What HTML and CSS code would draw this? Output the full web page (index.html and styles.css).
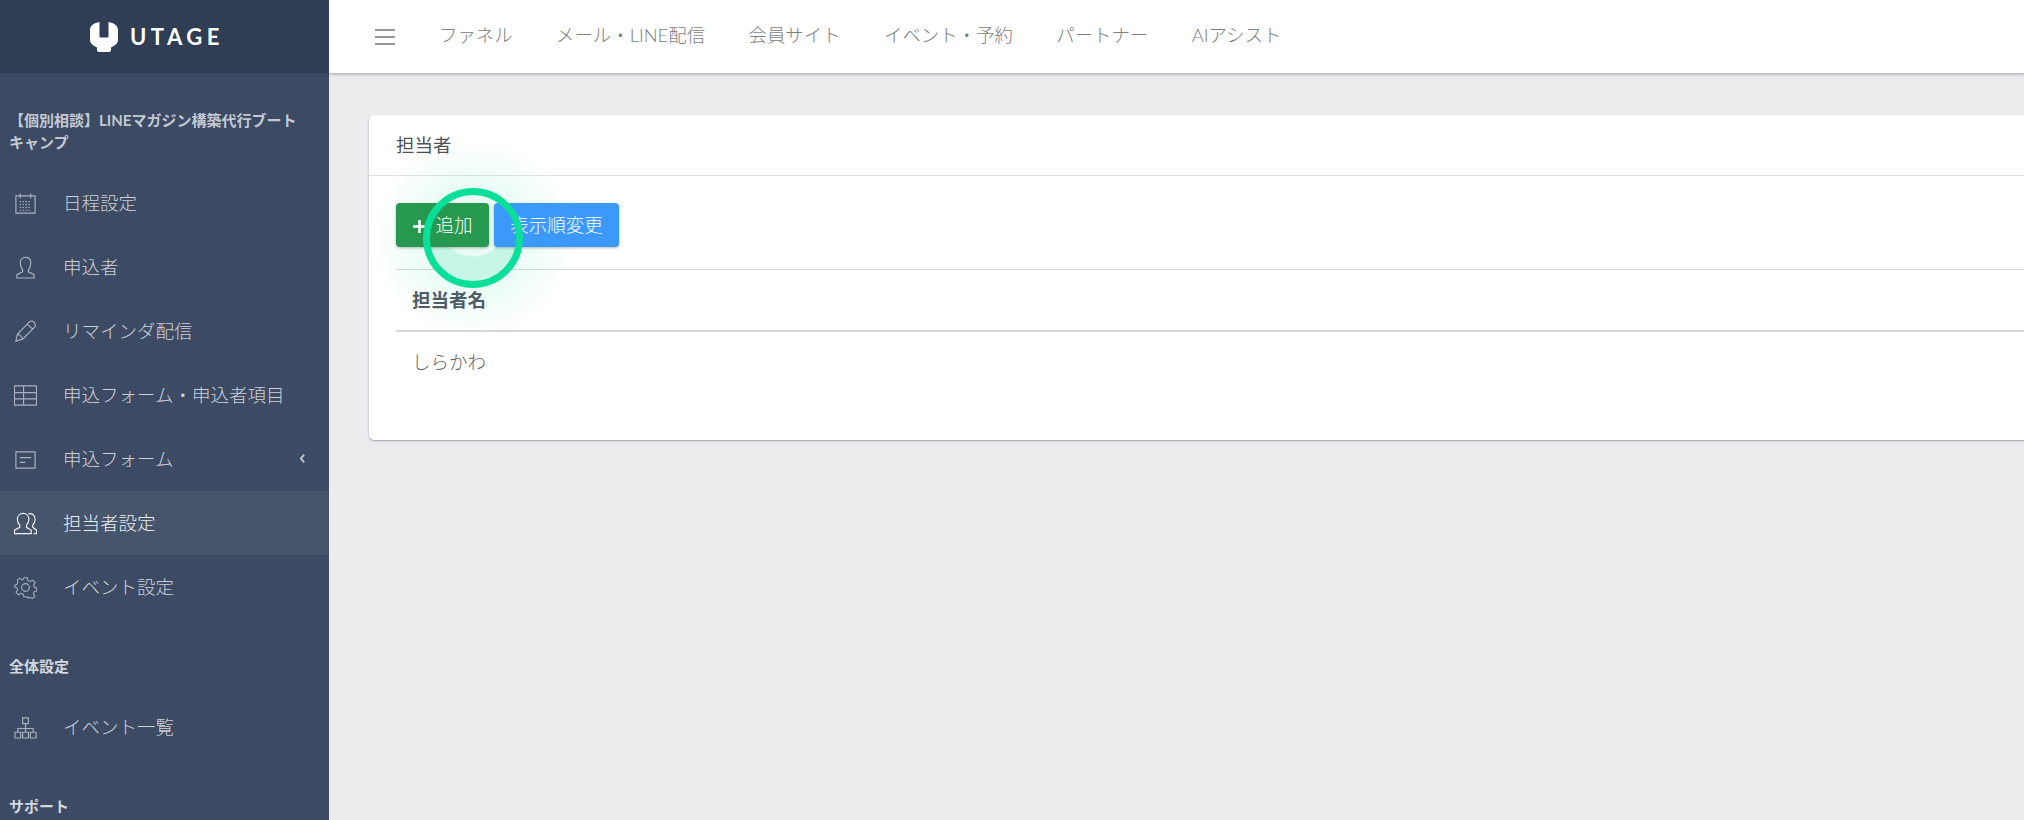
FILE: index.html
```html
<!DOCTYPE html>
<html lang="ja">
<head>
<meta charset="utf-8">
<title>担当者設定</title>
<link rel="stylesheet" href="styles.css">
</head>
<body>
<div class="app">
  <aside class="sidebar">
    <div class="brand">
      <svg class="brand-mark" viewBox="0 0 28 30"><path d="M9.500 0C4 1 0 3.500 0 8v10c0 3 2 5 7 7.500V28c0 1 1 2 2 2h10c1 0 2-1 2-2v-2.500c5-2.500 7-4.500 7-7.500V8c0-4.500-4-7-9.500-8v14.500c0 .6-.4 1-1 1h-7c-.6 0-1-.4-1-1z" fill="#fff"/></svg>
      <span class="brand-name">UTAGE</span>
    </div>
    <div class="side-heading event-title">【個別相談】LINEマガジン構築代行ブートキャンプ</div>
    <nav class="side-list">
      <a class="side-item"><svg class="ico" viewBox="0 0 24 24"><path d="M2 4h20v18H2zM6.500 1.500v5M17.500 1.500v5"/><path class="dots" d="M6 10h12M6 13h12M6 16h12M6 19h12"/></svg><span>日程設定</span></a>
      <a class="side-item"><svg class="ico" viewBox="0 0 24 24"><path d="M9 14.500C7.500 12.500 6.500 9.500 6.500 7c0-3.300 2.300-5.500 5.500-5.500s5.500 2.200 5.500 5.500c0 2.500-1 5.500-2.500 7.500v2l6 3v3.500H3V19.500l6-3z"/></svg><span>申込者</span></a>
      <a class="side-item"><svg class="ico" viewBox="0 0 24 24"><path d="M2 22l1.500-7L16 2c1.500-1 3.500-1 5 .5s1.500 3.500.5 5L9 20zM3.500 15c2.500 0 5 2.500 5.500 5M14 4.500l5.500 5"/></svg><span>リマインダ配信</span></a>
      <a class="side-item"><svg class="ico" viewBox="0 0 24 24"><path d="M.500 2h23v20H.500zM.500 9h23M.500 15.500h23M10 2v20"/></svg><span>申込フォーム・申込者項目</span></a>
      <a class="side-item has-caret"><svg class="ico" viewBox="0 0 24 24"><path d="M2 4h20v17H2zM6 10h12M6 15h6"/></svg><span>申込フォーム</span><svg class="caret" viewBox="0 0 6 10"><path d="M4.500 1.500 1.500 5l3 3.500"/></svg></a>
      <a class="side-item active"><svg class="ico" viewBox="0 0 24 24"><path d="M6 14c-1.500-2-2.500-4-2.500-6.500C3.500 4 6 1.500 9.500 1.500s6 2.500 6 6c0 2.500-1 4.500-2.500 6.500v2l5 3v3.500H.500V19l5.500-3zM15 2c4-1 7 1.500 7 5.500 0 2.500-1 4.500-2.500 6.500v2l4 3v3.500h-3"/></svg><span>担当者設定</span></a>
      <a class="side-item"><svg class="ico" viewBox="0 0 24 24"><circle cx="12" cy="12" r="4"/><path d="M10 1h4l.8 3.300 2.500 1 3-1.700 2.800 3-1.800 2.800 1 2.500 2.700.8v3.600l-3 .8-1 2.500 1.700 2.900-2.800 2.700-2.900-1.700-2.500 1L14 23h-4l-.8-3-2.500-1-2.900 1.700-2.800-2.800L2.700 15l-1-2.500L-.5 12v-2.400l2.500-.8 1-2.500L2.400 3.700l2.800-2.400 2.900 2 1.200-.5z" transform="translate(1.300 1) scale(.9)"/></svg><span>イベント設定</span></a>
    </nav>
    <div class="side-heading group-title">全体設定</div>
    <nav class="side-list">
      <a class="side-item"><svg class="ico" viewBox="0 0 24 24"><path d="M9 2h6v6H9zM1 17h6v6H1zM9 17h6v6H9zM17 17h6v6h-6zM12 8v9M4 17v-4h16v4"/></svg><span>イベント一覧</span></a>
    </nav>
    <div class="side-heading group-title support">サポート</div>
  </aside>
  <div class="main">
    <header class="topbar">
      <svg class="burger" viewBox="0 0 20 16"><path d="M0 1h20M0 8h20M0 15h20"/></svg>
      <nav class="top-nav">
        <a>ファネル</a><a>メール・LINE配信</a><a>会員サイト</a><a>イベント・予約</a><a>パートナー</a><a>AIアシスト</a>
      </nav>
    </header>
    <main class="content">
      <section class="card">
        <h2 class="card-head">担当者</h2>
        <div class="card-body">
          <div class="actions">
            <button class="btn btn-add"><svg class="plus" viewBox="0 0 12 12"><path d="M6 0v12M0 6h12"/></svg>追加</button>
            <button class="btn btn-sort">表示順変更</button>
          </div>
          <table class="table">
            <thead><tr><th>担当者名</th></tr></thead>
            <tbody><tr><td>しらかわ</td></tr></tbody>
          </table>
        </div>
      </section>
    </main>
  </div>
</div>
<div class="click-glow"></div>
<div class="click-mark"></div>
</body>
</html>
```
FILE: styles.css
```css
* { box-sizing: border-box; }
html, body { margin: 0; height: 100%; overflow: hidden; }
body {
  font-family: Lato, "Noto Sans CJK JP", sans-serif;
  font-size: 18.5px;
  font-weight: 300;
  color: #676a6c;
  background: #ebecee;
}
.app { display: flex; height: 820px; }
.sidebar {
  width: 329px;
  flex: none;
  background: #3c4a63;
  color: #c6ccd6;
  overflow: hidden;
}
.brand {
  height: 73px;
  background: #2f3d55;
  display: flex;
  align-items: center;
  justify-content: center;
  gap: 12px;
  padding-right: 15px;
}
.brand-mark { width: 28px; height: 30px; margin-top: 1px; flex: none; }
.brand-name { color: #fff; font-size: 22px; font-weight: 700; letter-spacing: 4.5px; line-height: 1; }
.side-heading { font-size: 15px; font-weight: 700; padding: 0 20px 0 9px; color: #c3c9d3; }
.event-title { margin-top: 36px; height: 62px; line-height: 22px; }
.group-title { line-height: 22px; margin-top: 36px; margin-bottom: 18px; color: #d3d7de; }
.support { margin-top: 36px; }
.side-list { display: flex; flex-direction: column; }
.side-item {
  height: 64px;
  display: flex;
  align-items: center;
  padding-left: 14px;
  gap: 26px;
  color: #cdd2da;
}
.side-item span { margin-top: -3px; }
.side-item .ico {
  width: 23px;
  height: 23px;
  flex: none;
  fill: none;
  stroke: #aab2bf;
  stroke-width: 1.200;
}
.side-item .dots { stroke-dasharray: 1.500 1.500; }
.side-item.active { background: #46546c; color: #eef0f3; }
.side-item.active .ico { stroke: #f0f2f5; }
.has-caret { position: relative; }
.has-caret .caret {
  position: absolute;
  right: 23px;
  top: 26px;
  width: 7px;
  height: 11px;
  fill: none;
  stroke: #b9c0cb;
  stroke-width: 1.800;
}
.main { flex: 1; min-width: 0; display: flex; flex-direction: column; }
.topbar {
  height: 73px;
  background: #fff;
  display: flex;
  align-items: center;
  padding-left: 46px;
  box-shadow: 0 1px 3px rgba(60, 64, 90, .45);
  position: relative;
}
.burger { width: 20px; height: 16px; stroke: #757575; stroke-width: 1.400; fill: none; flex: none; }
.top-nav { display: flex; gap: 43.5px; margin-left: 44px; margin-top: -5px; font-size: 18.4px; color: #7b7e81; }
.content { padding: 42px 0 0 40px; }
.card {
  background: #fff;
  width: 1700px;
  height: 325px;
  border-radius: 5px;
  box-shadow: 0 1px 2px rgba(60, 64, 100, .45);
}
.card-head {
  margin: 0;
  height: 61px;
  line-height: 60px;
  padding-left: 27px;
  font-size: 18.5px;
  font-weight: 400;
  color: #4f5357;
  border-bottom: 1px solid #dfe1e4;
}
.card-body { padding: 27px 0 0 27px; }
.actions { display: flex; gap: 5px; height: 67px; border-bottom: 1px solid #d8dadc; }
.btn {
  position: relative;
  z-index: 1;
  height: 44px;
  border: 0;
  border-radius: 4px;
  color: #fff;
  font: inherit;
  padding: 0 0 3px;
  box-shadow: 0 1px 3px rgba(40, 50, 70, .35);
}
.btn-add { width: 93px; background: #27984f; }
.btn-sort { width: 125px; background: #3b99fc; }
.plus { width: 13px; height: 13px; stroke: #fff; stroke-width: 2.400; fill: none; margin: 0 9px 0 1px; vertical-align: -1px; }
.table { position: relative; z-index: 1; border-collapse: collapse; width: 100%; }
.table th {
  text-align: left;
  height: 61px;
  padding: 0 16px 3px;
  color: #4f5b67;
  font-weight: 700;
  border-bottom: 2px solid #d4d6d9;
}
.table td { height: 60px; padding: 0 16px 2px; color: #5f6266; }
.click-glow {
  position: absolute;
  left: 373px;
  top: 138px;
  width: 200px;
  height: 200px;
  border-radius: 50%;
  background:
    radial-gradient(circle at 50% 43%, #e9fbf4 0 32px, rgba(233, 251, 244, 0) 33px),
    radial-gradient(circle, #c8f6e6 0 46px, rgba(10, 223, 154, .09) 47px, rgba(10, 223, 154, .05) 70px, rgba(10, 223, 154, 0) 100px);
}
.click-mark {
  position: absolute;
  z-index: 2;
  left: 423px;
  top: 188px;
  width: 100px;
  height: 100px;
  border-radius: 50%;
  border: 7px solid #0adf9a;
}
```
